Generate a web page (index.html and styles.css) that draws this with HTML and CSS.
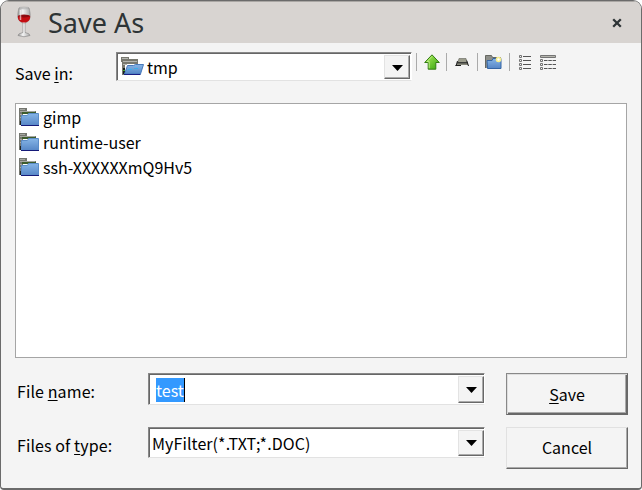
FILE: index.html
```html
<!DOCTYPE html>
<html lang="en">
<head>
<meta charset="utf-8">
<title>Save As</title>
<link rel="stylesheet" href="styles.css">
</head>
<body>
<svg class="defs" aria-hidden="true">
  <defs>
    <linearGradient id="blue" x1="0" y1="0" x2="0" y2="1"><stop offset="0" stop-color="#86b5e6"/><stop offset="1" stop-color="#5686c6"/></linearGradient>
    <linearGradient id="green" x1="0" y1="0" x2="1" y2="1"><stop offset="0" stop-color="#b0ee60"/><stop offset="1" stop-color="#35a50c"/></linearGradient>
    <linearGradient id="glass" x1="0" y1="0" x2="1" y2="0"><stop offset="0" stop-color="#999"/><stop offset=".4" stop-color="#f4f4f4"/><stop offset="1" stop-color="#aaa"/></linearGradient>
    <symbol id="folder" viewBox="0 0 20 18">
      <path d="M0 0h8v3h9v3H4v11H0z" fill="#74766f"/>
      <path d="M1 1.500h5M1 3.500h15M1 6.500h2M1 9.500h2" stroke="#a5a7a1"/>
      <path d="M1 13h2v4H1z" fill="#222"/>
      <path d="M3 4h14v2H3z" fill="#3c5c2c"/>
      <path d="M2.500 7.500h6l1-2h10v12h-17z" fill="url(#blue)" stroke="#5a8cc8"/>
      <path d="M2 17.500h18" stroke="#151a78"/>
    </symbol>
  </defs>
</svg>
<div class="window">
  <header class="titlebar">
    <svg class="wine" viewBox="0 0 16 32">
      <path d="M3 2C1.200 9 .8 15 7 17v9.500Q2 27.500 2 29.500q6 2.500 12 0 0-2-5-3V17c6.200-2 5.800-8 4-15z" fill="url(#glass)" stroke="#8d8b8a" stroke-width=".7"/>
      <path d="M1.900 10h12.200c.4 4-2 6.500-6.100 6.500S1.500 14 1.900 10z" fill="#c40d12"/>
      <ellipse cx="8" cy="10" rx="6" ry="1.500" fill="#8d0b10"/>
      <ellipse cx="8" cy="2" rx="5" ry=".8" fill="#eee" stroke="#999" stroke-width=".6"/>
      <path d="M4.500 4v10" stroke="#fff" stroke-width="1.500" opacity=".6"/>
      <path d="M8 18v9" stroke="#eee"/>
    </svg>
    <h1 class="title">Save As</h1>
    <svg class="close" viewBox="0 0 10 10"><path d="M1.200 1.200l7.600 7.600M8.800 1.200l-7.600 7.600" stroke="#2e3436" stroke-width="2.300"/></svg>
  </header>
  <div class="location">
    <span class="label"><span class="txt">Save <u>i</u>n:</span></span>
    <div class="combo">
      <svg class="open-folder" viewBox="0 0 23 19">
        <path d="M0 0h8v2h9v5H4v11H1V5H0z" fill="#77786f"/>
        <path d="M1 1.500h6M2 4.500h14M2 7.500h4" stroke="#b4b5b0"/>
        <path d="M2 11h2v6H2z" fill="#172019"/><path d="M2 13h2v1H2z" fill="#4da72b"/>
        <path d="M6.500 8.500h6l2-1h8l-3 9.500h-16z" fill="url(#blue)" stroke="#4779bb"/>
        <path d="M3 17.500h16.500" stroke="#191e83"/>
        <path d="M7 12.500h4M13 11.500h4" stroke="#3cb0e9"/>
      </svg>
      <span class="txt">tmp</span>
      <span class="drop"><svg viewBox="0 0 11 6" class="caret"><path d="M0 0h11L5.500 6z"/></svg></span>
    </div>
    <div class="tools">
      <i class="sep"></i>
      <svg class="tool" viewBox="0 0 16 16"><path d="M8 .8l7.300 7.700h-3.500v6.700H4.200V8.500H.7z" fill="url(#green)" stroke="#337c13"/><path d="M8 2.400L3 7.600h2.200v6.600" fill="none" stroke="#c8f294" opacity=".8"/></svg>
      <i class="sep"></i>
      <svg class="tool" viewBox="0 0 16 16"><path d="M5 4.500h7l1 4H3.800z" fill="#9b9c8c" stroke="#62635a" stroke-width=".6"/><path d="M3 9h11v2H3z" fill="#85867a"/><path d="M3.500 7L2 12M12.700 6.500L14.500 12M1.500 11.500H7M3 8.800h10.500" stroke="#1c1c1c"/></svg>
      <i class="sep"></i>
      <svg class="tool wide" viewBox="0 0 17 16"><path d="M.5 14V1.500h6l1 2h8V14" fill="#8d8f8a" stroke="#666862"/><path d="M2.500 14.500l-.5-8h5l1-2h8v10z" fill="url(#blue)" stroke="#3465a4"/><circle cx="13.500" cy="5.500" r="2.800" fill="#f5ed8e"/><circle cx="13.500" cy="5.500" r="1.200" fill="#fff"/></svg>
      <i class="sep"></i>
      <svg class="tool list" viewBox="0 0 12 16"><g fill="none" stroke="#747474"><path d="M.5.500h2v2h-2zM.5 4.500h2v2h-2zM.5 8.500h2v2h-2zM.5 12.500h2v2h-2z"/><path d="M4 1.500h8M4 5.500h8M4 9.500h8M4 13.500h8" stroke="#555"/></g></svg>
      <svg class="tool details" viewBox="0 0 16 16"><g fill="none" stroke="#747474"><path d="M.5.500h15v2H.5z" fill="#b5b5ad"/><path d="M.5 4.500h2v2h-2zM.5 8.500h2v2h-2zM.5 12.500h2v2h-2z"/><path d="M4 5.500h12M4 9.500h12M4 13.500h12" stroke="#555" stroke-dasharray="3.500 .8"/></g></svg>
    </div>
  </div>
  <ul class="files">
    <li><svg class="folder"><use href="#folder"/></svg><span class="txt">gimp</span></li>
    <li><svg class="folder"><use href="#folder"/></svg><span class="txt">runtime-user</span></li>
    <li><svg class="folder"><use href="#folder"/></svg><span class="txt">ssh-XXXXXXmQ9Hv5</span></li>
  </ul>
  <div class="form">
    <span class="label"><span class="txt">File <u>n</u>ame:</span></span>
    <div class="combo name"><span class="txt selected">test</span><span class="drop"><svg viewBox="0 0 11 6" class="caret"><path d="M0 0h11L5.500 6z"/></svg></span></div>
    <div class="button default"><span class="txt"><u>S</u>ave</span></div>
    <span class="label"><span class="txt">Files of <u>t</u>ype:</span></span>
    <div class="combo type"><span class="txt">MyFilter(*.TXT;*.DOC)</span><span class="drop"><svg viewBox="0 0 11 6" class="caret"><path d="M0 0h11L5.500 6z"/></svg></span></div>
    <div class="button"><span class="txt">Cancel</span></div>
  </div>
</div>
</body>
</html>
```
FILE: styles.css
```css
* { box-sizing: border-box; }
body { margin: 0; background: #fff; color: #000; font: 16px/24px "Noto Sans CJK SC", "Noto Sans", sans-serif; }
svg { display: block; flex: none; }
.defs { position: absolute; width: 0; height: 0; }
.txt { white-space: nowrap; }
u { text-decoration: underline; text-decoration-thickness: 1px; text-underline-offset: 2px; text-decoration-skip-ink: none; }
.window { width: 642px; height: 490px; background: #f4f4f4; border: 1px solid #6b6b6b; border-bottom-width: 2px; border-radius: 9px 9px 4px 4px; overflow: hidden; }
.titlebar { height: 42px; background: #d8d4d1; border-top: 1px solid #aaa7a4; display: flex; align-items: center; padding: 0 19px 0 15px; }
.wine { width: 16px; height: 32px; margin-top: -1px; }
.title { flex: 1; margin: 1px 0 0 16px; font: 400 27px/38px "Noto Sans", sans-serif; color: #2e3436; }
.close { width: 10px; height: 10px; margin-top: 0; }
.location { display: flex; height: 60px; padding: 9px 0 0 14px; }
.location .label { width: 101px; padding-top: 9px; }
.combo { display: flex; align-items: center; background: #fff; border: 1px solid; border-color: #888 #fff #e2e2e2 #888; box-shadow: inset 1px 1px #666; padding: 2px 0 1px 4px; }
.location .combo { width: 296px; height: 29px; padding-right: 1px; }
.combo .txt { flex: none; }
.drop { width: 26px; align-self: stretch; margin-left: auto; flex: none; display: flex; align-items: center; justify-content: center; background: #f4f4f4; border: 1px solid; border-color: #e3e3e3 #686868 #686868 #e3e3e3; box-shadow: inset -1px -1px #aaa; }
.caret { width: 11px; height: 6px; margin-top: 2px; }
.form .caret { margin-top: 0; }
.open-folder { width: 23px; height: 19px; margin: -1px 3px 0 0; }
.tools { display: flex; padding: 1px 0 0 4px; }
.sep { width: 1px; height: 18px; background: #aaa; }
.tool { width: 16px; height: 16px; margin: 1px 6px 0 7px; }
.tool + .sep + .tool { margin-right: 7px; margin-left: 7px; }
.tool.wide { width: 17px; }
.tools .tool.list { width: 12px; margin: 2px 0 0 9px; }
.tool.details { margin: 2px 0 0 9px; }
.files { list-style: none; width: 612px; height: 255px; margin: 0 0 0 14px; padding: 1px 0 0 3px; background: #fff; border: 1px solid #a5a5a5; }
.files li { display: flex; height: 25px; }
.folder { width: 20px; height: 18px; margin: 3px 4px 0 0; }
.form { display: grid; grid-template-columns: 131px 337px 142px; grid-template-rows: 42px 42px; row-gap: 12px; padding: 15px 0 0 16px; }
.form .label { padding-top: 6px; letter-spacing: .1px; }
.form .combo { width: 337px; height: 32px; }
.form .combo.type { height: 31px; padding-left: 3px; letter-spacing: .08px; }
.form .combo.name { padding-left: 7px; }
.selected { background: #3399ff; color: #fff; border-right: 1px solid #000; }
.button { margin-left: 21px; width: 122px; height: 42px; padding-bottom: 2px; display: flex; align-items: center; justify-content: center; border: 1px solid; border-color: #e1e1e1 #686868 #686868 #e1e1e1; box-shadow: inset -1px -1px #aaa; }
.button.default { padding-bottom: 0; border-color: #888 #686868 #686868 #888; box-shadow: inset 1px 1px #dedede, inset -1px -1px #686868, inset -2px -2px #aaa; }
```
